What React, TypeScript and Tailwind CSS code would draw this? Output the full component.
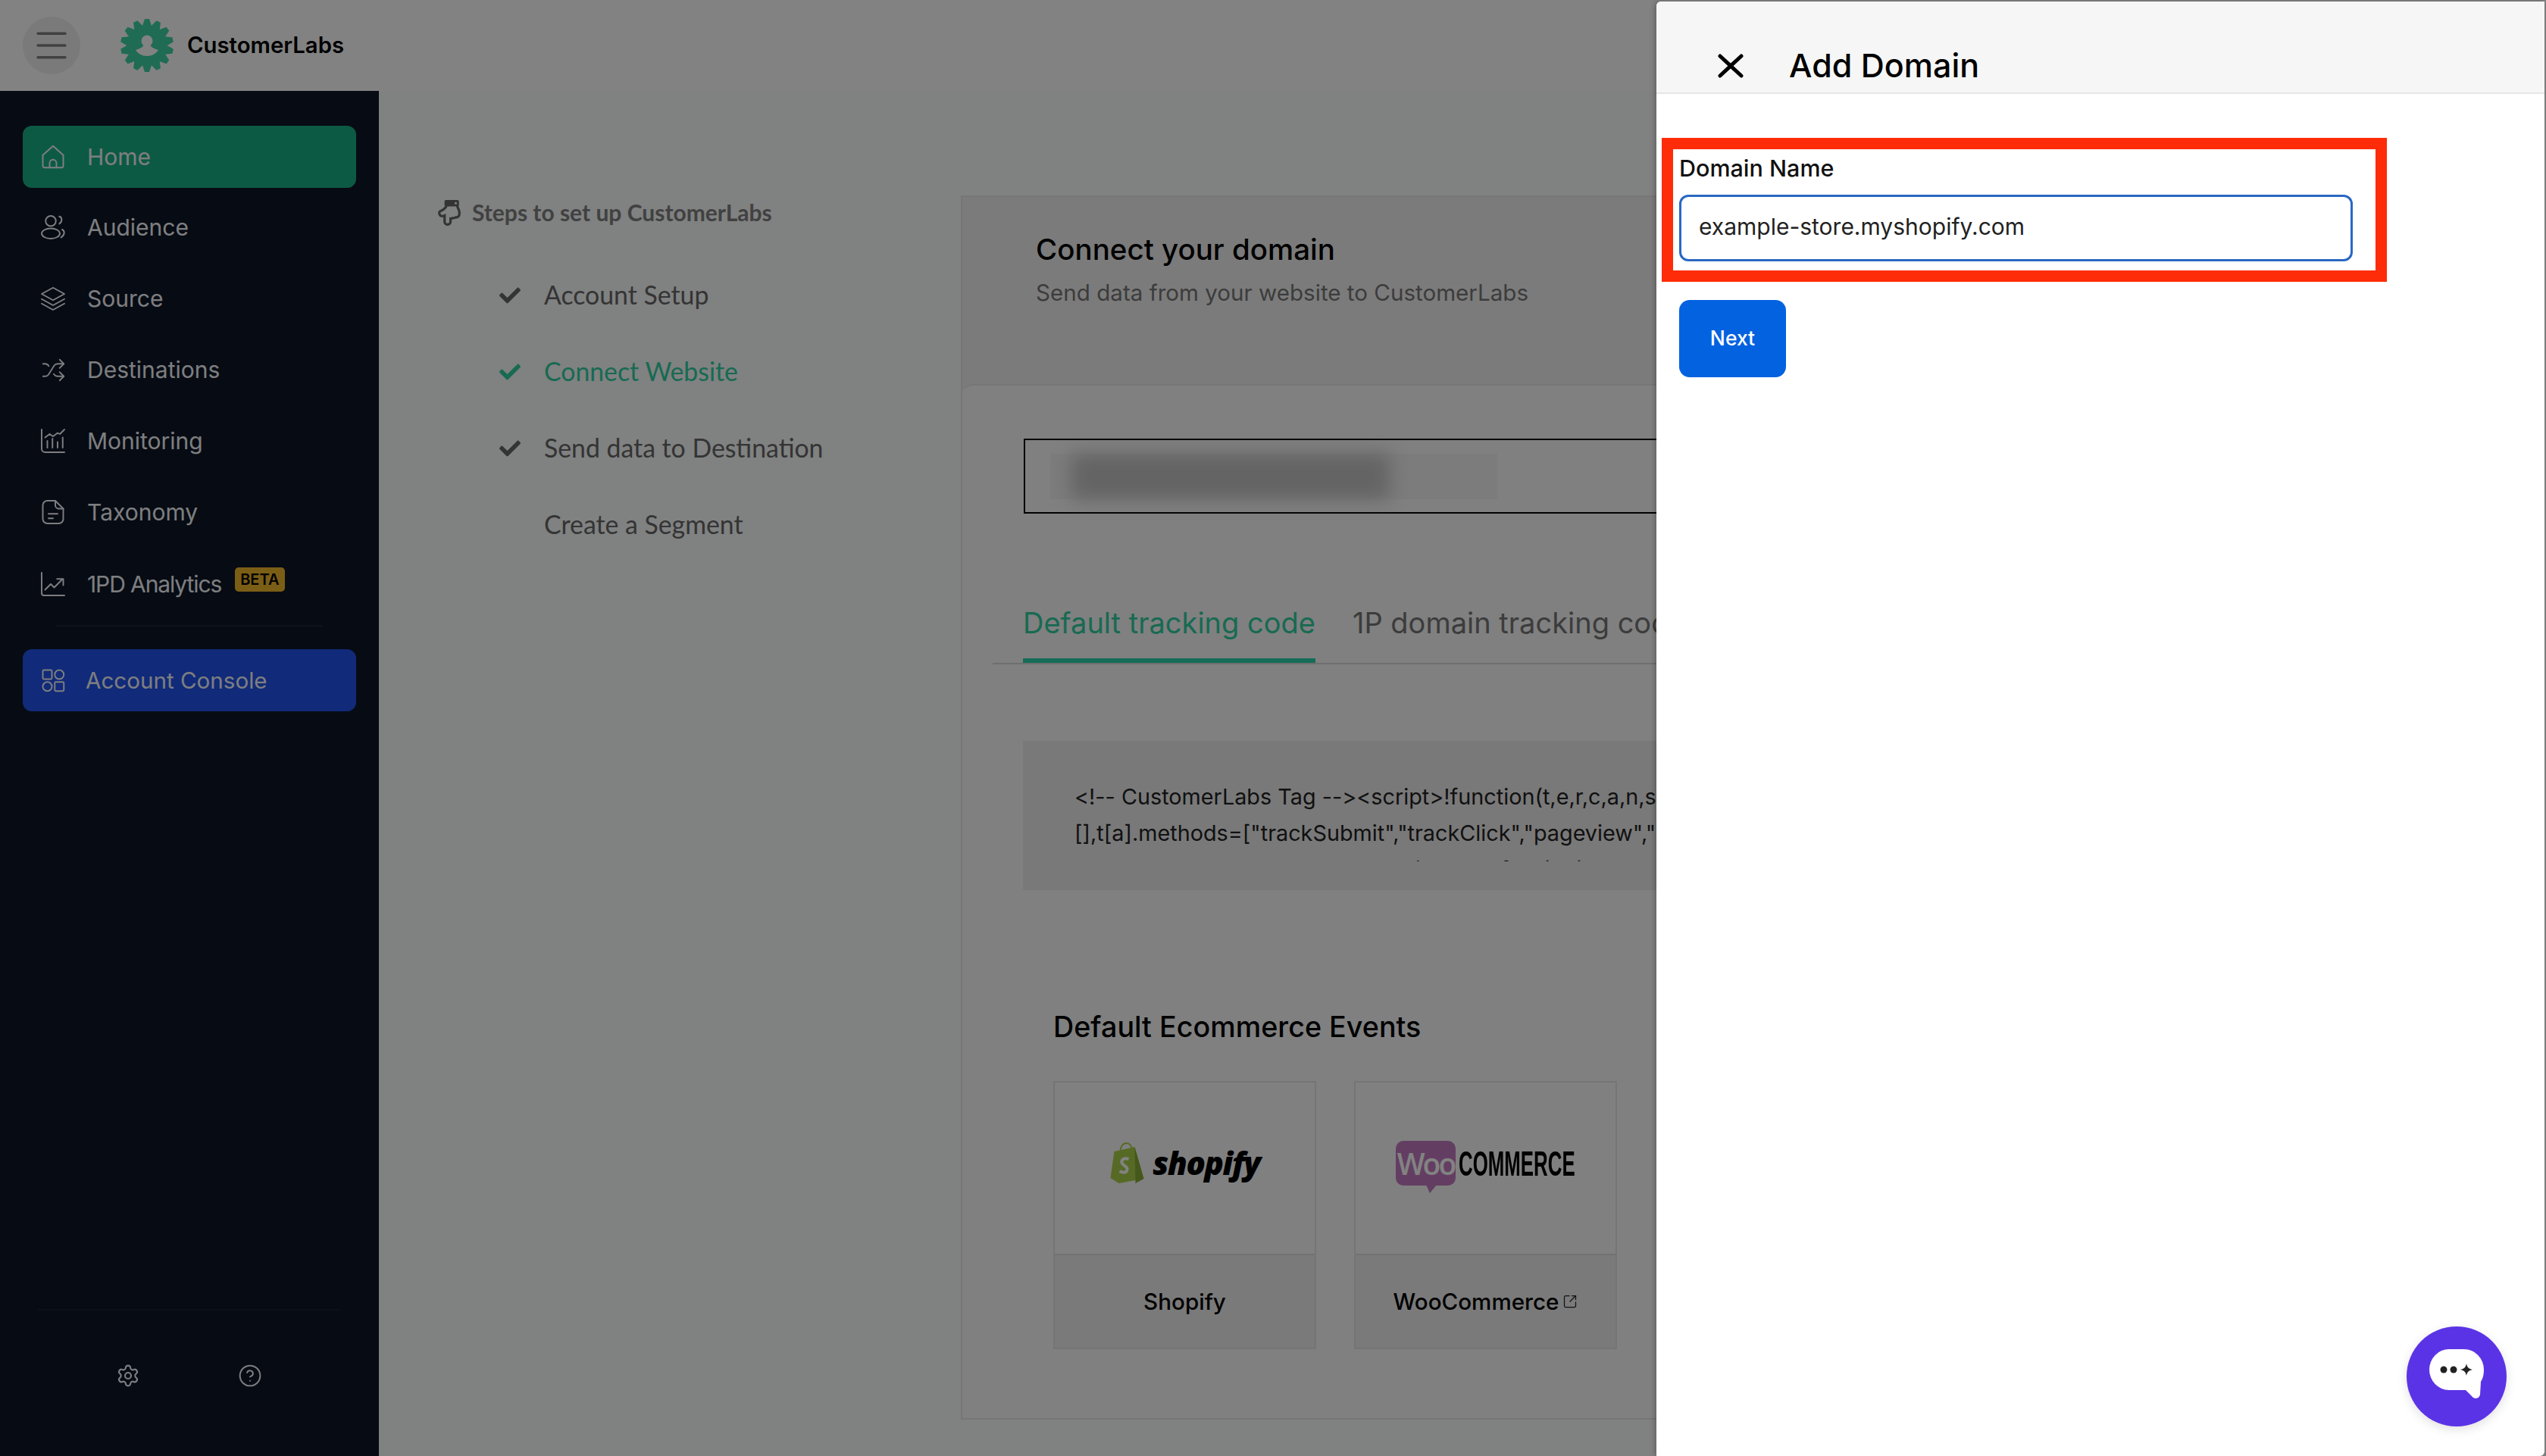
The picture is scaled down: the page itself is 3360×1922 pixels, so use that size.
import { Menu, Shuffle, Settings, CircleHelp, SquareArrowOutUpRight } from "lucide-react";
import { FaCheck, FaRegHandPointDown } from "react-icons/fa";

function Logo() {
  const teeth = Array.from({ length: 14 }, (_, i) => (i * 360) / 14);
  return (
    <svg viewBox="0 0 70 74" className="h-[74px] w-[70px]">
      <g fill="#3dd2a3">
        <circle cx="35" cy="37" r="27" />
        {teeth.map((a) => (
          <path key={a} d="M32 2h6l3 9h-12z" transform={`rotate(${a} 35 37)`} />
        ))}
      </g>
      {/* person cut out of the gear */}
      <g fill="#fff">
        <circle cx="35" cy="31" r="7.5" />
        <path d="M31 36h8c1 3 5 5 11 7-3 5-9 8-15 8s-12-3-15-8c6-2 10-4 11-7z" />
      </g>
    </svg>
  );
}

function Icon({ children }: { children: React.ReactNode }) {
  return (
    <svg viewBox="2 2 20 20" fill="none" stroke="currentColor" strokeWidth="1.3" strokeLinecap="round" strokeLinejoin="round" className="h-[30px] w-[30px] shrink-0 overflow-visible">
      {children}
    </svg>
  );
}

const navItems = [
  {
    label: "Audience",
    icon: (
      <Icon>
        <circle cx="10" cy="6.5" r="4.5" />
        <ellipse cx="10" cy="17.5" rx="8" ry="4.5" />
        <path d="M17.5 2.5c2.5.5 3 4.500 0 6.500M20 14c2.500 1 2.500 5-1 7" />
      </Icon>
    ),
  },
  {
    label: "Source",
    icon: (
      <Icon>
        <path d="M12 2.5 22 8l-10 5.5L2 8z" />
        <path d="m2 12.5 10 5.5 10-5.5M2 16.5 12 22l10-5.5" />
      </Icon>
    ),
  },
  { label: "Destinations", icon: <Shuffle className="-m-[1.5px] h-[33px] w-[33px] shrink-0" strokeWidth={1.3} /> },
  {
    label: "Monitoring",
    icon: (
      <Icon>
        <path d="M2 2v17a3 3 0 0 0 3 3h17" />
        <path d="M7 18v-6M11.500 18v-8M16 18v-5M20.500 18v-9" />
        <path d="m5 9 4-3 3 2 4-3 2 1 4-4" />
      </Icon>
    ),
  },
  {
    label: "Taxonomy",
    icon: (
      <Icon>
        <path d="M7 2h7l7 7v9a4 4 0 0 1-4 4H7a4 4 0 0 1-4-4V6a4 4 0 0 1 4-4z" />
        <path d="M14 2v4a3 3 0 0 0 3 3h4M8 13.500h8M8 17.500h4" />
      </Icon>
    ),
  },
];

const steps = [
  { label: "Account Setup", done: true },
  { label: "Connect Website", done: true, active: true },
  { label: "Send data to Destination", done: true },
  { label: "Create a Segment", done: false },
];

function ShopifyLogo() {
  return (
    <div className="flex items-center gap-[10px]">
      <svg viewBox="0 0 46 54" className="h-[54px] w-[47px]">
        <path d="M6 12 33 6l12 42-33 6L1 47z" fill="#a9d04a" />
        <path d="M33 6l12 42-11 6z" fill="#86ad35" />
        <path d="M14 12c0-7 4-11 8-11s7 3 7 9" fill="none" stroke="#a9d04a" strokeWidth="2" />
        <path d="M25 22c-6-2-10 1-9 5s8 4 7 9-6 4-10 2" fill="none" stroke="#fff" strokeWidth="4" />
      </svg>
      <span className="font-['Open_Sans',sans-serif] text-[42px] leading-none font-extrabold tracking-[-1.5px] text-black italic">shopify</span>
    </div>
  );
}

function WooLogo() {
  return (
    <div className="flex items-center">
      <div className="relative flex h-[59px] w-[79px] items-center justify-center rounded-[10px] bg-[#c27ac0]">
        <span className="font-['Open_Sans',sans-serif] text-[39px] leading-none font-semibold tracking-[-3px] text-white">Woo</span>
        <span className="absolute top-[58px] left-[40px] h-0 w-0 border-t-[11px] border-r-[9px] border-l-[5px] border-t-[#c27ac0] border-r-transparent border-l-transparent" />
      </div>
      <div className="ml-[4px] w-[154px]">
        <span className="inline-block origin-left scale-x-[0.55] font-['Liberation_Sans',sans-serif] text-[47px] leading-none font-bold whitespace-nowrap text-black">COMMERCE</span>
      </div>
    </div>
  );
}

function EventCard({ logo, label, link }: { logo: React.ReactNode; label: string; link?: boolean }) {
  return (
    <div className="flex w-[347px] flex-col border-2 border-[#e6e6e6]">
      <div className="flex h-[228px] items-center justify-center border-b-2 border-[#e0e0e0] bg-[#fbfbfb] pb-[14px]">{logo}</div>
      <div className="flex h-[122px] items-center justify-center gap-[5px] bg-[#f0f0f0] text-[29.6px] font-medium text-black">
        {label}
        {link && <SquareArrowOutUpRight className="h-[20px] w-[20px] text-[#222]" strokeWidth={1.5} />}
      </div>
    </div>
  );
}

export default function App() {
  return (
    <div className="relative h-[1922px] w-[3360px] overflow-hidden bg-white font-['Inter',sans-serif]">
      {/* Page behind the drawer */}
      <header className="flex h-[120px] items-center bg-white pl-[30px]">
        <div className="flex h-[76px] w-[76px] items-center justify-center rounded-full bg-[#efefef] text-[#808080]">
          <Menu className="h-[54px] w-[54px]" strokeWidth={1.5} />
        </div>
        <div className="ml-[53px]">
          <Logo />
        </div>
        <span className="ml-[18px] text-[29.3px] font-semibold text-black">CustomerLabs</span>
      </header>

      <div className="flex h-[1802px]">
        <aside className="flex w-[500px] shrink-0 flex-col bg-[#0e1627] px-[30px] pt-[46px] pb-[90px] text-[#f6f8fc]">
          <div className="flex h-[82px] items-center gap-[30px] rounded-[12px] bg-[#1ab086] pl-[25px] text-[30px]">
            <Icon>
              <path d="M3 10.500 12 2.500l9 8V20a1.500 1.500 0 0 1-1.500 1.500h-15A1.500 1.500 0 0 1 3 20z" />
              <path d="M9 21.500v-4a3 3 0 0 1 6 0v4" />
            </Icon>
            Home
          </div>
          <nav className="mt-[5px] flex flex-col">
            {navItems.map((item) => (
              <div key={item.label} className="flex h-[94px] items-center gap-[30px] pl-[25px] text-[30px]">
                {item.icon}
                {item.label}
              </div>
            ))}
            <div className="flex h-[96px] items-center gap-[30px] pl-[25px] text-[30px] tracking-[-1.1px]">
              <Icon>
                <path d="M2 2v18a2 2 0 0 0 2 2h18" />
                <path d="m5 17 5-5 3 3 7-7" />
                <path d="M15.500 7.500H21V13" />
              </Icon>
              <span>1PD Analytics</span>
              <span className="-mt-[12px] -ml-[12px] rounded-[5px] bg-[#f2b92b] px-[7px] py-[1px] text-[20px] font-semibold tracking-normal text-black">BETA</span>
            </div>
          </nav>
          <div className="mx-[44px] mt-[6px] border-t-2 border-[#1e2636]" />
          <div className="mt-[30px] flex h-[82px] items-center gap-[28px] rounded-[12px] bg-[#2354ee] pl-[25px] text-[29.6px]">
            <Icon>
              <rect x="3" y="3" width="8" height="8" rx="1" />
              <circle cx="17.500" cy="7" r="4" />
              <circle cx="7" cy="17.500" r="4" />
              <rect x="13.500" y="13.500" width="8" height="8" rx="1" />
            </Icon>
            Account Console
          </div>
          <div className="mx-[20px] mt-auto border-t-2 border-[#1a2131]" />
          <div className="mt-[70px] flex justify-between pr-[124px] pl-[123px]">
            <Settings className="h-[32px] w-[32px]" strokeWidth={1.6} />
            <CircleHelp className="h-[32px] w-[32px]" strokeWidth={1.5} />
          </div>
        </aside>

        <main className="flex flex-1 bg-[#fbfefd] pt-[138px] pl-[68px]">
          <div className="w-[700px] shrink-0 font-['Lato',sans-serif]">
            <div className="ml-[10px] flex items-center gap-[15px] text-[30px] font-bold text-[#808080]">
              <FaRegHandPointDown className="h-[34px] w-[30px] text-[#666]" />
              Steps to set up CustomerLabs
            </div>
            <ul className="mt-[36px] flex flex-col">
              {steps.map((s) => (
                <li key={s.label} className={`flex h-[101px] items-center text-[33.8px] ${s.active ? "text-[#2fd1a2]" : "text-[#666]"}`}>
                  <span className="ml-[90px] w-[60px]">{s.done && <FaCheck className="h-[28px] w-[30px]" />}</span>
                  {s.label}
                </li>
              ))}
            </ul>
          </div>

          {/* Connect your domain card, runs on under the drawer */}
          <section className="flex h-[1616px] w-[1000px] shrink-0 flex-col self-start overflow-hidden border-2 border-[#e8e8e8] bg-[#f2f2f2]">
            <div className="h-[247px] pt-[46px] pl-[97px]">
              <h2 className="text-[38.5px] leading-[46px] font-medium text-black">Connect your domain</h2>
              <p className="mt-[16px] text-[29.6px] leading-[36px] text-[#777]">Send data from your website to CustomerLabs</p>
            </div>
            <div className="flex-1 rounded-tl-[14px] border-t-2 border-[#e8e8e8] bg-[#fbfbfb]">
              <div className="mt-[70px] ml-[81px] h-[99px] w-[900px] border-2 border-black py-[18px] pl-[33px]">
                <div className="h-[60px] w-[590px] bg-[#f3f3f3] px-[28px]">
                  <div className="h-[60px] w-[420px] bg-[#c4c4c4] blur-[12px]" />
                </div>
              </div>

              <div className="mt-[121px] ml-[40px] flex gap-[49px] border-b-2 border-[#d8d8d8] pl-[40px] text-[38px] leading-[46px] whitespace-nowrap">
                <div className="border-b-[6px] border-[#2ad6ae] pb-[24px] text-[#2fd1a2]">Default tracking code</div>
                <div className="text-[#777]">1P domain tracking code</div>
              </div>

              <div className="mt-[101px] ml-[80px] h-[197px] w-[900px] bg-[#eeeeee] pt-[50px] pl-[68px]">
                <div className="h-[109px] overflow-hidden text-[28.8px] leading-[48px] whitespace-nowrap text-[#222] [font-feature-settings:'calt'_0,'liga'_0]">
                  <div>{'<!-- CustomerLabs Tag --><script>!function(t,e,r,c,a,n,s){'}</div>
                  <div>{'[],t[a].methods=["trackSubmit","trackClick","pageview","i'}</div>
                  <div>{'r.src=e,o.async=!0,r.parentNode.insertBefore(o,r)'}</div>
                </div>
              </div>

              <h3 className="mt-[157px] ml-[120px] text-[37.7px] leading-[46px] font-medium text-black">Default Ecommerce Events</h3>
              <div className="mt-[49px] ml-[120px] flex gap-[50px]">
                <EventCard logo={<ShopifyLogo />} label="Shopify" />
                <EventCard logo={<WooLogo />} label="WooCommerce" link />
              </div>
            </div>
          </section>
        </main>
      </div>

      {/* Dim layer */}
      <div className="absolute inset-0 bg-black/[0.49]" />

      {/* Add Domain drawer */}
      <aside className="absolute top-[2px] right-[2px] bottom-0 left-[2186px] overflow-hidden rounded-tl-[6px] rounded-br-[6px] bg-white shadow-[-2px_0_6px_rgba(0,0,0,0.25)]">
        <div className="flex h-[122px] items-end gap-[60px] border-b-2 border-[#e6e6e6] bg-[#f6f6f6] pb-[12px] pl-[81px]">
          <svg viewBox="0 0 34 32" className="mb-[7px] h-[32px] w-[34px]" fill="none" stroke="#000" strokeWidth="5" strokeLinecap="round">
            <path d="M3 3l28 26M31 3 3 29" />
          </svg>
          <h2 className="text-[43px] leading-[48px] font-medium text-black">Add Domain</h2>
        </div>

        <div className="mt-[58px] ml-[7px] h-[190px] w-[957px] border-[15px] border-[#fe2c08] pt-[8px] pl-[8px]">
          <label className="block text-[30.5px] leading-[34px] font-medium text-[#111]">Domain Name</label>
          <input
            readOnly
            value="example-store.myshopify.com"
            className="mt-[18px] h-[88px] w-[889px] rounded-[12px] border-[3px] border-[#2a68c4] pb-[4px] pl-[23px] text-[30px] text-[#222] outline-none"
          />
        </div>

        <button className="mt-[24px] ml-[30px] h-[102px] w-[141px] rounded-[14px] bg-[#0362e0] text-[26.5px] font-medium text-white">Next</button>
      </aside>

      {/* Chat launcher */}
      <div className="absolute right-[52px] bottom-[39px] h-[132px] w-[132px] rounded-full bg-[#5b33e6] shadow-[0_4px_14px_rgba(0,0,0,0.12)]">
        <svg viewBox="0 0 132 132" className="h-[132px] w-[132px]">
          <path d="M56 30h20a26 27 0 0 1 26 27c0 6-1 11-4 16l-1 17a6 6 0 0 1-11 2L78 84H56a26 27 0 0 1 0-54z" fill="#fff" />
          <circle cx="49" cy="57" r="4.500" fill="#222" />
          <circle cx="62" cy="57" r="4.500" fill="#222" />
          <path d="M79 49c1 5 3 7 8 8-5 1-7 3-8 8-1-5-3-7-8-8 5-1 7-3 8-8z" fill="#222" />
        </svg>
      </div>
    </div>
  );
}
